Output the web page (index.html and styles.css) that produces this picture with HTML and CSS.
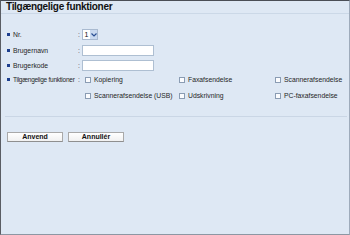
FILE: index.html
```html
<!DOCTYPE html>
<html>
<head>
<meta charset="utf-8">
<link rel="stylesheet" href="styles.css">
</head>
<body>
<div class="frame">
  <div class="title">Tilgængelige funktioner</div>
  <div class="form">
    <div class="row">
      <div class="label"><span class="bullet"></span>Nr.</div>
      <div class="colon">:</div>
      <div class="control">
        <div class="select"><span class="val">1</span><span class="arrow"><svg width="6" height="4" viewBox="0 0 6 4"><path d="M0.5 0.5 L3 3 L5.5 0.5" fill="none" stroke="#2a4f93" stroke-width="1.2"/></svg></span></div>
      </div>
    </div>
    <div class="row">
      <div class="label"><span class="bullet"></span>Brugernavn</div>
      <div class="colon">:</div>
      <div class="control"><div class="input"></div></div>
    </div>
    <div class="row row3">
      <div class="label"><span class="bullet"></span>Brugerkode</div>
      <div class="colon">:</div>
      <div class="control"><div class="input"></div></div>
    </div>
    <div class="row row4">
      <div class="label narrow"><span class="bullet"></span>Tilgængelige funktioner</div>
      <div class="colon">:</div>
      <div class="checks">
        <div class="check"><span class="box"></span>Kopiering</div>
        <div class="check"><span class="box"></span>Faxafsendelse</div>
        <div class="check"><span class="box"></span>Scannerafsendelse</div>
        <div class="check"><span class="box"></span>Scannerafsendelse (USB)</div>
        <div class="check"><span class="box"></span>Udskrivning</div>
        <div class="check"><span class="box"></span>PC-faxafsendelse</div>
      </div>
    </div>
  </div>
  <div class="sep"></div>
  <div class="buttons">
    <div class="btn">Anvend</div>
    <div class="btn">Annullér</div>
  </div>
</div>
</body>
</html>
```
FILE: styles.css
```css
html, body {
  margin: 0;
  padding: 0;
}
body {
  width: 350px;
  height: 235px;
  font-family: "Liberation Sans", Arial, sans-serif;
  background: #dfe9f5;
}
.frame {
  box-sizing: border-box;
  width: 350px;
  height: 235px;
  background: #dee8f4;
  border-top: 1px solid #4a4e56;
  border-left: 1px solid #5a5d63;
  border-right: 1px solid #9eabbb;
  border-bottom: 1px solid #8d97a3;
}
.title {
  height: 12px;
  line-height: 12px;
  padding-left: 5px;
  font-size: 10px;
  letter-spacing: -0.3px;
  font-weight: bold;
  color: #111;
  border-bottom: 1px solid #cbd8e7;
}
.form {
  padding: 15px 0 0 6px;
}
.row {
  display: grid;
  grid-template-columns: 71px 4px auto;
  align-items: center;
  height: 11px;
  margin-bottom: 5px;
}
.row3 {
  margin-top: -1px;
}
.row4 {
  align-items: start;
  height: auto;
  margin-top: -1px;
  margin-bottom: 0;
}
.label {
  display: flex;
  align-items: center;
  font-size: 6.8px;
  color: #262626;
  white-space: nowrap;
}
.label.narrow {
  font-size: 6.5px;
  letter-spacing: -0.25px;
}
.row4 .label, .row4 .colon {
  height: 9px;
  line-height: 9px;
}
.bullet {
  width: 3px;
  height: 3px;
  background: #1d3f8e;
  margin-right: 3px;
  flex: none;
}
.colon {
  font-size: 6.8px;
  color: #444;
}
.control {
  display: flex;
  align-items: center;
}
.select {
  box-sizing: border-box;
  width: 16px;
  height: 11px;
  border: 1px solid #a9bad0;
  background: #fff;
  display: flex;
}
.select .val {
  width: 7px;
  font-size: 7px;
  line-height: 9px;
  text-align: center;
  color: #111;
}
.select .arrow {
  flex: 1;
  background: #c9d9ef;
  display: flex;
  align-items: center;
  justify-content: center;
}
.input {
  box-sizing: border-box;
  width: 72px;
  height: 11px;
  background: #fff;
  border: 1px solid #aebfd2;
}
.checks {
  display: grid;
  grid-template-columns: 94px 96px auto;
  row-gap: 7px;
  padding-left: 3px;
}
.check {
  display: flex;
  align-items: center;
  height: 9px;
  font-size: 6.8px;
  color: #262626;
  white-space: nowrap;
}
.box {
  box-sizing: border-box;
  width: 6px;
  height: 6px;
  border: 1px solid #8a9cb3;
  background: #fbfcfe;
  margin-right: 3px;
  flex: none;
}
.sep {
  height: 1px;
  background: #cad6e5;
  margin: 16px 2px 0 4px;
}
.buttons {
  display: flex;
  gap: 5px;
  padding: 15px 0 0 6px;
}
.btn {
  box-sizing: border-box;
  width: 56px;
  height: 10px;
  line-height: 8px;
  text-align: center;
  font-size: 7px;
  font-weight: bold;
  color: #111;
  background: linear-gradient(#ffffff, #f1f1f1);
  border: 1px solid #a9a9a9;
  border-bottom-color: #8f8f8f;
}
```
